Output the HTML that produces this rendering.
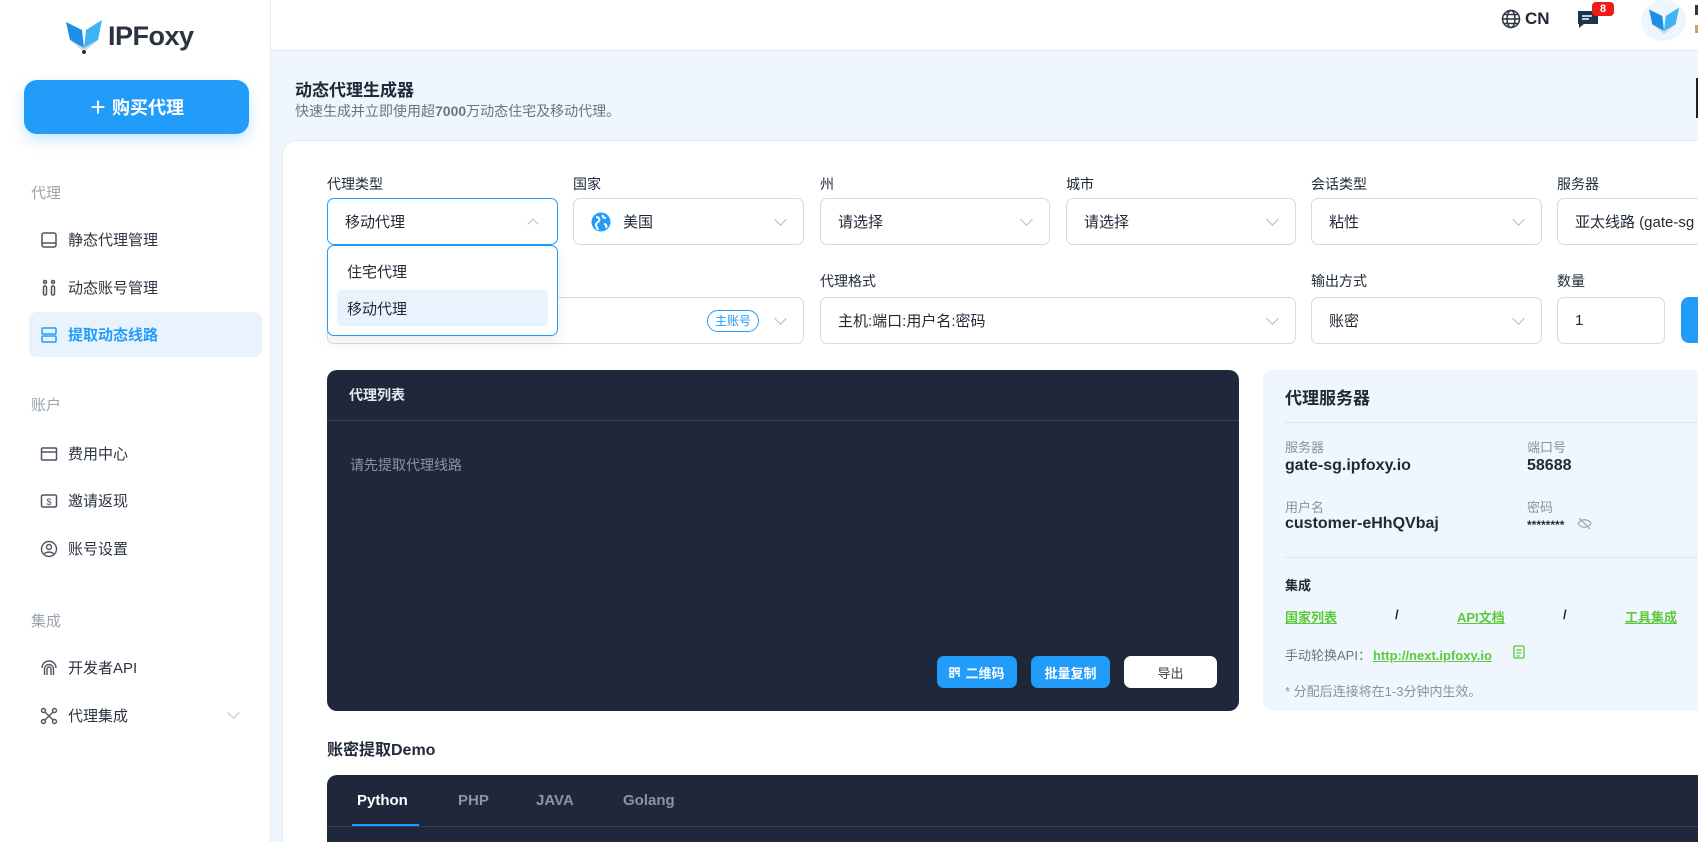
<!DOCTYPE html>
<html style="width:1698px;height:842px;overflow:hidden"><head><meta charset="utf-8"><style>
*{box-sizing:border-box;margin:0;padding:0}
body{width:1698px;height:842px;overflow:hidden;background:#f0f6fd;font-family:"Liberation Sans","Noto Sans CJK SC",sans-serif;color:#1f2937;position:relative}
.abs{position:absolute}
.side{left:0;top:0;width:271px;height:842px;background:#fff;border-right:1px solid #e8edf3}
.hdr{left:271px;top:0;right:0;height:51px;background:#fff;border-bottom:1px solid #e3e9f0}
.buy{left:24px;top:80px;width:225px;height:54px;border-radius:13px;background:#229cf9;color:#fff;font-size:18px;font-weight:bold;display:flex;align-items:center;justify-content:center;box-shadow:0 6px 14px rgba(34,156,249,.25)}
.sec{left:31px;font-size:15px;color:#9aa3ae}
.mi{left:40px;font-size:15px;color:#2b3440;display:flex;align-items:center;gap:10px}
.mi svg{width:18px;height:18px}
.card{left:282px;top:140px;width:1430px;height:702px;background:#fff;border-radius:14px 0 0 0;border:1px solid #e6ecf2;border-bottom:none}
.lab{font-size:14px;color:#1f2937}
.sel{height:47px;border:1px solid #d6dbe1;border-radius:7px;background:#fff;font-size:15px;color:#1f2937;display:flex;align-items:center;padding-left:17px}
.chev{position:absolute;right:18px;top:16px;width:9px;height:9px;border-right:1.5px solid #b5bcc5;border-bottom:1.5px solid #b5bcc5;transform:rotate(45deg)}
.dark{background:#1f283a;border-radius:10px}
.btn{height:32px;border-radius:7px;font-size:13px;display:flex;align-items:center;justify-content:center;font-weight:bold}
.lk{color:#5cc93c;text-decoration:underline;font-size:13px;font-weight:bold}
.g{font-size:13px;color:#8a929c}
.v{font-size:16px;color:#1f2937;font-weight:bold}
</style></head><body>
<div class="abs side"></div>
<div class="abs hdr"></div>
<!-- logo -->
<svg class="abs" style="left:64px;top:18px" width="40" height="36" viewBox="0 0 40 36"><path d="M2 4 L18 12 L20 30 L6 22 Z" fill="#1d8fe6"/><path d="M38 2 L22 12 L20 30 L34 22 Z" fill="#3fb4f5"/><path d="M6 22 L20 30 L34 22 L20 34 Z" fill="#cfd8e0"/><circle cx="20" cy="34" r="2" fill="#2b3440"/></svg>
<div class="abs" style="left:108px;top:21px;font-size:27px;font-weight:bold;color:#2b3440;letter-spacing:-0.5px">IPFoxy</div>
<div class="abs buy">＋ 购买代理</div>
<div class="abs sec" style="top:182px">代理</div>
<div class="abs mi" style="top:229px"><svg viewBox="0 0 18 18" fill="none" stroke="#4b5563" stroke-width="1.5"><rect x="2" y="2" width="14" height="14" rx="2"/><path d="M2 12h14"/></svg>静态代理管理</div>
<div class="abs mi" style="top:277px"><svg viewBox="0 0 18 18" fill="none" stroke="#4b5563" stroke-width="1.5"><circle cx="5" cy="3" r="1.5"/><circle cx="13" cy="3" r="1.5"/><rect x="3.5" y="7" width="3" height="9" rx="1.5"/><rect x="11.5" y="7" width="3" height="9" rx="1.5"/></svg>动态账号管理</div>
<div class="abs" style="left:29px;top:312px;width:233px;height:45px;border-radius:8px;background:#e8f3fd"></div>
<div class="abs mi" style="top:324px;color:#229cf9;font-weight:bold"><svg viewBox="0 0 18 18" fill="none" stroke="#229cf9" stroke-width="1.5"><rect x="2" y="2" width="14" height="6" rx="1"/><rect x="2" y="10" width="14" height="6" rx="1"/></svg>提取动态线路</div>
<div class="abs sec" style="top:394px">账户</div>
<div class="abs mi" style="top:443px"><svg viewBox="0 0 18 18" fill="none" stroke="#4b5563" stroke-width="1.5"><rect x="1.5" y="3" width="15" height="12" rx="1"/><path d="M1.5 7h15"/></svg>费用中心</div>
<div class="abs mi" style="top:490px"><svg viewBox="0 0 18 18" fill="none" stroke="#4b5563" stroke-width="1.5"><rect x="1.5" y="3" width="15" height="12" rx="1.5"/><text x="9" y="13" font-size="9" text-anchor="middle" fill="#4b5563" stroke="none">$</text></svg>邀请返现</div>
<div class="abs mi" style="top:538px"><svg viewBox="0 0 18 18" fill="none" stroke="#4b5563" stroke-width="1.4"><circle cx="9" cy="9" r="7.5"/><circle cx="9" cy="7" r="2.5"/><path d="M4.5 14c1-2.5 8-2.5 9 0"/></svg>账号设置</div>
<div class="abs sec" style="top:610px">集成</div>
<div class="abs mi" style="top:657px"><svg viewBox="0 0 18 18" fill="none" stroke="#4b5563" stroke-width="1.4"><path d="M2 9a7 7 0 0 1 14 0M4.5 16V10a4.5 4.5 0 0 1 9 0v6M7 16v-6a2 2 0 0 1 4 0v6"/></svg>开发者API</div>
<div class="abs mi" style="top:705px"><svg viewBox="0 0 18 18" fill="none" stroke="#4b5563" stroke-width="1.4"><circle cx="3.5" cy="3.5" r="2"/><circle cx="14.5" cy="3.5" r="2"/><circle cx="3.5" cy="14.5" r="2"/><circle cx="14.5" cy="14.5" r="2"/><path d="M5 5l8 8M13 5l-8 8"/></svg>代理集成</div>
<div class="abs" style="left:229px;top:708px;width:9px;height:9px;border-right:1.5px solid #c0c6cd;border-bottom:1.5px solid #c0c6cd;transform:rotate(45deg)"></div>

<!-- header right -->
<svg class="abs" style="left:1501px;top:9px" width="20" height="20" viewBox="0 0 20 20" fill="none" stroke="#2b3440" stroke-width="1.5"><circle cx="10" cy="10" r="8.5"/><ellipse cx="10" cy="10" rx="4" ry="8.5"/><path d="M1.5 10h17M3 5.5h14M3 14.5h14"/></svg>
<div class="abs" style="left:1525px;top:9px;font-size:17px;font-weight:bold;color:#1f2937">CN</div>
<svg class="abs" style="left:1577px;top:9px" width="22" height="20" viewBox="0 0 22 20"><path d="M1 2h20v13H7l-5 4v-4H1z" fill="#1f3450"/><path d="M5 7h10M5 10h7" stroke="#fff" stroke-width="1.5"/></svg>
<div class="abs" style="left:1592px;top:2px;width:22px;height:14px;border-radius:4px;background:#f01a1a;color:#fff;font-size:11px;font-weight:bold;text-align:center;line-height:14px">8</div>
<div class="abs" style="left:1641px;top:0px;width:45px;height:41px;border-radius:50%;background:#eef5fc"></div>
<svg class="abs" style="left:1647px;top:6px" width="34" height="30" viewBox="0 0 40 36"><path d="M2 4 L18 12 L20 30 L6 22 Z" fill="#1d8fe6"/><path d="M38 2 L22 12 L20 30 L34 22 Z" fill="#3fb4f5"/><path d="M6 22 L20 30 L34 22 L20 34 Z" fill="#cfd8e0"/></svg>
<div class="abs" style="left:1695px;top:5px;width:3px;height:10px;background:#333"></div>
<div class="abs" style="left:1695px;top:25px;width:3px;height:8px;background:#c9a07a"></div>
<div class="abs" style="left:1696px;top:78px;width:2px;height:40px;background:#222"></div>

<div class="abs" style="left:295px;top:76px;font-size:17px;font-weight:bold;color:#1f2937">动态代理生成器</div>
<div class="abs" style="left:295px;top:101px;font-size:14px;color:#6b7480">快速生成并立即使用超<b>7000</b>万动态住宅及移动代理。</div>

<div class="abs card"></div>
<!-- row1 -->
<div class="abs lab" style="left:327px;top:174px">代理类型</div>
<div class="abs lab" style="left:573px;top:174px">国家</div>
<div class="abs lab" style="left:820px;top:174px">州</div>
<div class="abs lab" style="left:1066px;top:174px">城市</div>
<div class="abs lab" style="left:1311px;top:174px">会话类型</div>
<div class="abs lab" style="left:1557px;top:174px">服务器</div>
<div class="abs sel" style="left:327px;top:198px;width:231px;border-color:#229cf9">移动代理<div class="abs" style="right:20px;top:21px;width:8px;height:8px;border-left:1.5px solid #b5bcc5;border-top:1.5px solid #b5bcc5;transform:rotate(45deg)"></div></div>
<div class="abs sel" style="left:573px;top:198px;width:231px"><svg width="20" height="20" viewBox="0 0 20 20" style="margin-right:12px"><circle cx="10" cy="10" r="9.5" fill="#229cf9"/><path d="M5 5c3 0 4 2 3 4s-3 1-3 4c0 2 2 3 2 5M12 3c-1 2 1 3 3 3M13 12c2 0 3 2 2 4" stroke="#fff" stroke-width="2" fill="none"/></svg>美国<div class="chev"></div></div>
<div class="abs sel" style="left:820px;top:198px;width:230px">请选择<div class="chev"></div></div>
<div class="abs sel" style="left:1066px;top:198px;width:230px">请选择<div class="chev"></div></div>
<div class="abs sel" style="left:1311px;top:198px;width:231px">粘性<div class="chev"></div></div>
<div class="abs sel" style="left:1557px;top:198px;width:160px">亚太线路 (gate-sg</div>
<!-- row2 -->
<div class="abs lab" style="left:820px;top:271px">代理格式</div>
<div class="abs lab" style="left:1311px;top:271px">输出方式</div>
<div class="abs lab" style="left:1557px;top:271px">数量</div>
<div class="abs sel" style="left:327px;top:297px;width:477px"><div class="abs" style="right:44px;top:12px;height:22px;padding:0 7px;border:1px solid #229cf9;border-radius:11px;color:#229cf9;font-size:12px;line-height:20px">主账号</div><div class="chev"></div></div>
<div class="abs sel" style="left:820px;top:297px;width:476px">主机:端口:用户名:密码<div class="chev"></div></div>
<div class="abs sel" style="left:1311px;top:297px;width:231px">账密<div class="chev"></div></div>
<div class="abs sel" style="left:1557px;top:297px;width:108px">1</div>
<div class="abs" style="left:1681px;top:297px;width:17px;height:46px;border-radius:8px 0 0 8px;background:#229cf9"></div>
<!-- dropdown -->
<div class="abs" style="left:327px;top:245px;width:231px;height:91px;background:#fff;border:1px solid #229cf9;border-radius:7px;box-shadow:0 6px 14px rgba(0,0,0,.08)"></div>
<div class="abs" style="left:347px;top:261px;font-size:15px;color:#1f2937">住宅代理</div>
<div class="abs" style="left:337px;top:290px;width:211px;height:36px;background:#e8f3fd;border-radius:4px"></div>
<div class="abs" style="left:347px;top:298px;font-size:15px;color:#1f2937">移动代理</div>

<!-- proxy list -->
<div class="abs dark" style="left:327px;top:370px;width:912px;height:341px"></div>
<div class="abs" style="left:349px;top:385px;font-size:14px;font-weight:bold;color:#e5e9ef">代理列表</div>
<div class="abs" style="left:327px;top:420px;width:912px;height:1px;background:#36415a"></div>
<div class="abs" style="left:350px;top:455px;font-size:14px;color:#8a94a5">请先提取代理线路</div>
<div class="abs btn" style="left:937px;top:656px;width:80px;background:#229cf9;color:#fff"><svg width="11" height="11" viewBox="0 0 11 11" style="margin-right:5px" fill="none" stroke="#fff" stroke-width="1.5"><rect x="1" y="1" width="3.5" height="3.5"/><rect x="6.5" y="1" width="3.5" height="3.5"/><rect x="1" y="6.5" width="3.5" height="3.5"/><path d="M6.5 6.5h3.5v3.5"/></svg>二维码</div>
<div class="abs btn" style="left:1031px;top:656px;width:79px;background:#229cf9;color:#fff">批量复制</div>
<div class="abs btn" style="left:1124px;top:656px;width:93px;background:#fff;color:#374151;font-weight:normal">导出</div>

<!-- server card -->
<div class="abs" style="left:1263px;top:370px;width:435px;height:341px;background:#f0f6fd;border-radius:10px 0 0 10px"></div>
<div class="abs" style="left:1285px;top:384px;font-size:17px;font-weight:bold;color:#1f2937">代理服务器</div>
<div class="abs" style="left:1285px;top:422px;width:413px;height:1px;background:#dde6ef"></div>
<div class="abs g" style="left:1285px;top:437px">服务器</div>
<div class="abs v" style="left:1285px;top:457px">gate-sg.ipfoxy.io</div>
<div class="abs g" style="left:1527px;top:437px">端口号</div>
<div class="abs v" style="left:1527px;top:457px">58688</div>
<div class="abs g" style="left:1285px;top:497px">用户名</div>
<div class="abs v" style="left:1285px;top:515px">customer-eHhQVbaj</div>
<div class="abs g" style="left:1527px;top:497px">密码</div>
<div class="abs" style="left:1527px;top:518px;font-size:12px;font-weight:bold;color:#1f2937">********</div>
<svg class="abs" style="left:1577px;top:517px" width="15" height="13" viewBox="0 0 15 13" fill="none" stroke="#9aa3ae" stroke-width="1.2"><path d="M1 6.5c3-5 10-5 13 0c-3 5-10 5-13 0z"/><path d="M2 1l11 11"/></svg>
<div class="abs" style="left:1285px;top:557px;width:413px;height:1px;background:#dde6ef"></div>
<div class="abs" style="left:1285px;top:575px;font-size:13px;font-weight:bold;color:#1f2937">集成</div>
<div class="abs lk" style="left:1285px;top:607px">国家列表</div>
<div class="abs" style="left:1395px;top:607px;font-size:13px;font-weight:bold">/</div>
<div class="abs lk" style="left:1457px;top:607px">API文档</div>
<div class="abs" style="left:1563px;top:607px;font-size:13px;font-weight:bold">/</div>
<div class="abs lk" style="left:1625px;top:607px">工具集成</div>
<div class="abs g" style="left:1285px;top:645px;color:#6b7480">手动轮换API：<span class="lk" style="margin-left:2px">http://next.ipfoxy.io</span></div>
<svg class="abs" style="left:1513px;top:645px" width="13" height="15" viewBox="0 0 13 15" fill="none" stroke="#5cc93c" stroke-width="1.3"><rect x="1" y="1" width="10" height="12" rx="1"/><path d="M3.5 5h5M3.5 8h5M3.5 11h3"/></svg>
<div class="abs g" style="left:1285px;top:681px">* 分配后连接将在1-3分钟内生效。</div>

<div class="abs" style="left:327px;top:736px;font-size:16px;font-weight:bold;color:#1f2937">账密提取Demo</div>
<div class="abs" style="left:327px;top:775px;width:1371px;height:67px;background:#1f283a;border-radius:10px 0 0 0"></div>
<div class="abs" style="left:327px;top:826px;width:1371px;height:1px;background:#36415a"></div>
<div class="abs" style="left:357px;top:792px;font-size:15px;font-weight:bold;color:#fff">Python</div>
<div class="abs" style="left:352px;top:824px;width:67px;height:2px;background:#229cf9"></div>
<div class="abs" style="left:458px;top:792px;font-size:15px;font-weight:bold;color:#8a94a5">PHP</div>
<div class="abs" style="left:536px;top:792px;font-size:15px;font-weight:bold;color:#8a94a5">JAVA</div>
<div class="abs" style="left:623px;top:792px;font-size:15px;font-weight:bold;color:#8a94a5">Golang</div>
</body></html>
